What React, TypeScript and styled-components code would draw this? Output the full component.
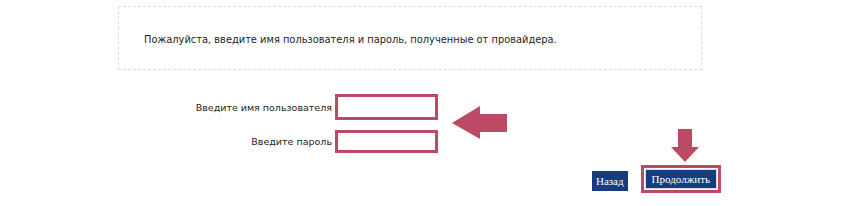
import React from "react";
import styled, { createGlobalStyle } from "styled-components";

const Global = createGlobalStyle`
  html, body { margin: 0; padding: 0; background: #ffffff; }
  body { font-family: "DejaVu Sans", Verdana, sans-serif; }
`;

const PINK = "#bd4a64";
const NAVY = "#163b80";

const Page = styled.div`
  position: relative;
  width: 860px;
  height: 206px;
  padding: 6px 0 0 118px;
  box-sizing: border-box;
`;

const InfoBox = styled.div`
  width: 584px;
  height: 64px;
  box-sizing: border-box;
  border: 1px dashed #dcdcdc;
  display: flex;
  align-items: center;
  padding: 2px 0 0 25px;
  font-size: 9.85px;
  color: #1e1e1e;
`;

const Form = styled.div`
  margin-top: 24px;
  display: grid;
  grid-template-columns: 214px 104px;
  column-gap: 3px;
  row-gap: 10px;
  align-items: center;
`;

const Label = styled.label`
  text-align: right;
  font-size: 9.5px;
  color: #1e1e1e;
`;

const Input = styled.input<{ $h: number }>`
  box-sizing: border-box;
  width: 103px;
  height: ${(p) => p.$h}px;
  border: 3px solid ${PINK};
  background: #fff;
  outline: none;
  padding: 0;
`;

const Actions = styled.div`
  margin-top: 12px;
  width: 603px;
  display: flex;
  justify-content: flex-end;
  align-items: flex-end;
  gap: 13px;
`;

const Btn = styled.button`
  font-family: "Liberation Serif", "Times New Roman", serif;
  font-size: 11px;
  color: #ffffff;
  background: ${NAVY};
  border: none;
  padding: 0 4px;
  height: 20px;
  margin-bottom: 2px;
`;

const Highlight = styled.div`
  border: 3px solid ${PINK};
  padding: 1px;
  background: #fff;
  display: flex;
`;

const MainBtn = styled(Btn)`
  margin: 0;
  height: 20px;
  padding: 0 6px;
  border: 1px solid #d9dde6;
`;

const Arrow = styled.svg`
  position: absolute;
  fill: ${PINK};
`;

export default function App() {
  return (
    <>
      <Global />
      <Page>
        <InfoBox>Пожалуйста, введите имя пользователя и пароль, полученные от провайдера.</InfoBox>
        <Form>
          <Label>Введите имя пользователя</Label>
          <Input $h={26} />
          <Label>Введите пароль</Label>
          <Input $h={23} type="password" />
        </Form>
        <Actions>
          <Btn>Назад</Btn>
          <Highlight>
            <MainBtn>Продолжить</MainBtn>
          </Highlight>
        </Actions>
        <Arrow style={{ left: 452, top: 106 }} width="56" height="34" viewBox="0 0 56 34">
          <polygon points="0,17 28,0 28,8 55,8 55,26 28,26 28,33" />
        </Arrow>
        <Arrow style={{ left: 670, top: 129 }} width="30" height="34" viewBox="0 0 30 34">
          <polygon points="8,0 22,0 22,18 29,18 15,33 1,18 8,18" />
        </Arrow>
      </Page>
    </>
  );
}
